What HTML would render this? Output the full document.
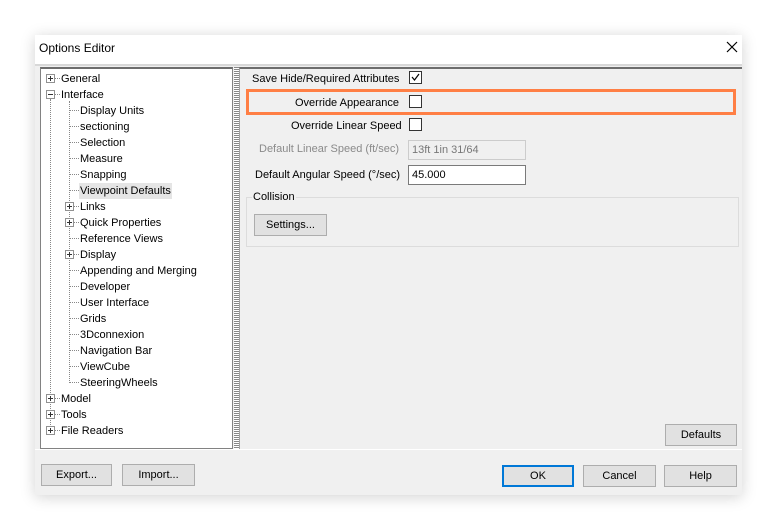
<!DOCTYPE html>
<html><head><style>
*{margin:0;padding:0;box-sizing:border-box}
body{width:777px;height:530px;background:#fff;font-family:"Liberation Sans",sans-serif;font-size:11px;color:#000;position:relative;overflow:hidden}
.dlg{position:absolute;left:35px;top:35px;width:707px;height:460px;background:#f0f0f0;box-shadow:0 2px 14px rgba(0,0,0,.18)}
.title{position:absolute;left:0;top:0;width:707px;height:29px;background:#fff;font-size:12px}
.a{position:absolute;white-space:nowrap}
.tree{position:absolute;left:40px;top:67px;width:193px;height:382px;background:#fff;border:1px solid #828282;border-top:2px solid #6d6d6d}
.row{position:absolute;height:16px;line-height:16px;white-space:nowrap}
.box{position:absolute;width:9px;height:9px;border:1px solid #919191;background:#fff}
.box:before{content:"";position:absolute;left:1px;top:3px;width:5px;height:1px;background:#333}
.box.p:after{content:"";position:absolute;left:3px;top:1px;width:1px;height:5px;background:#333}
.vl{position:absolute;width:1px;border-left:1px dotted #888}
.hl{position:absolute;height:1px;border-top:1px dotted #888}
.btn{position:absolute;height:22px;background:#e1e1e1;border:1px solid #adadad;text-align:center;line-height:20px;font-size:11px}
.cb{position:absolute;width:13px;height:13px;border:1px solid #333;background:#fff}
.inp{position:absolute;height:20px;border:1px solid #7a7a7a;background:#fff;padding-left:3px;line-height:18px}
</style></head><body>
<div class="dlg"></div>
<div class="title" style="left:35px;top:35px"><span class="a" style="left:4px;top:6px">Options Editor</span>
<svg class="a" style="left:691px;top:6px" width="12" height="12"><path d="M1 1L11 11M11 1L1 11" stroke="#000" stroke-width="1.2"/></svg></div>
<div class="a" style="left:35px;top:64px;width:707px;height:2px;background:#d8d8d8"></div>

<div class="tree"></div>
<div class="vl" style="left:50px;top:99px;height:334px"></div>
<div class="vl" style="left:69px;top:101px;height:282px"></div>
<div id="t"></div>
<div class="a" style="left:234px;top:67px;width:5px;height:382px;background:repeating-linear-gradient(#888 0 1px,#fff 1px 2px)"></div>
<div class="a" style="left:239px;top:67px;width:503px;height:382px;border-top:2px solid #6d6d6d;border-left:1px solid #a0a0a0"></div>
<div class="a" style="left:35px;top:449px;width:707px;height:1px;background:#fff"></div>

<div class="a" style="left:252px;top:73px">Save Hide/Required Attributes</div>
<div class="cb" style="left:409px;top:71px"></div>
<svg class="a" style="left:410px;top:72px" width="11" height="11"><path d="M2 5L4.5 8L9 2" stroke="#000" fill="none" stroke-width="1.2"/></svg>
<div class="a" style="left:246px;top:89px;width:490px;height:26px;border:3px solid #ff7f45"></div>
<div class="a" style="left:295px;top:97px">Override Appearance</div>
<div class="cb" style="left:409px;top:95px"></div>
<div class="a" style="left:291px;top:120px">Override Linear Speed</div>
<div class="cb" style="left:409px;top:118px"></div>
<div class="a" style="left:259px;top:143px;color:#8a8a8a">Default Linear Speed (ft/sec)</div>
<div class="inp" style="left:408px;top:140px;width:118px;background:#f0f0f0;border-color:#ccc;color:#777">13ft 1in 31/64</div>
<div class="a" style="left:255px;top:169px">Default Angular Speed (°/sec)</div>
<div class="inp" style="left:408px;top:165px;width:118px">45.000</div>
<div class="a" style="left:246px;top:197px;width:493px;height:50px;border:1px solid #dcdcdc"></div>
<div class="a" style="left:252px;top:191px;background:#f0f0f0;padding:0 1px">Collision</div>
<div class="btn" style="left:254px;top:214px;width:73px">Settings...</div>
<div class="btn" style="left:665px;top:424px;width:72px">Defaults</div>
<div class="btn" style="left:41px;top:464px;width:71px">Export...</div>
<div class="btn" style="left:122px;top:464px;width:73px">Import...</div>
<div class="btn" style="left:502px;top:465px;width:72px;border:2px solid #0078d7;line-height:18px">OK</div>
<div class="btn" style="left:583px;top:465px;width:73px">Cancel</div>
<div class="btn" style="left:664px;top:465px;width:73px">Help</div>
<script>
var items=[[0,'General','p'],[0,'Interface','m'],[1,'Display Units'],[1,'sectioning'],[1,'Selection'],[1,'Measure'],[1,'Snapping'],[1,'Viewpoint Defaults','','sel'],[1,'Links','p'],[1,'Quick Properties','p'],[1,'Reference Views'],[1,'Display','p'],[1,'Appending and Merging'],[1,'Developer'],[1,'User Interface'],[1,'Grids'],[1,'3Dconnexion'],[1,'Navigation Bar'],[1,'ViewCube'],[1,'SteeringWheels'],[0,'Model','p'],[0,'Tools','p'],[0,'File Readers','p']];
var h='';items.forEach(function(it,i){var y=71+i*16;var cx=it[0]?69:50;var tx=it[0]?80:61;
if(it[2]){h+='<div class="box '+(it[2]=='p'?'p':'')+'" style="left:'+(cx-4)+'px;top:'+(y+3)+'px"></div><div class="hl" style="left:'+(cx+5)+'px;top:'+(y+7)+'px;width:'+(tx-cx-6)+'px"></div>';}
else{h+='<div class="hl" style="left:'+(cx+1)+'px;top:'+(y+7)+'px;width:'+(tx-cx-2)+'px"></div>';}
h+='<div class="row" style="left:'+(tx-1)+'px;top:'+y+'px;padding:0 1px;'+(it[3]?'background:#e5e5e5':'')+'">'+it[1]+'</div>';});
document.getElementById('t').innerHTML=h;
</script>
</body></html>
